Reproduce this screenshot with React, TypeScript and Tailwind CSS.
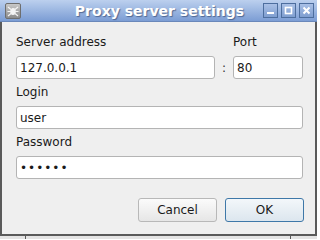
import React from "react";

const font = { fontFamily: '"DejaVu Sans", Verdana, sans-serif' };

const TitleButton = ({ kind }: { kind: "min" | "max" | "close" }) => (
  <div className="w-[15px] h-[15px] border border-[#4d6e9e] bg-gradient-to-b from-[#a9c0e6] to-[#7f9ed0] flex items-center justify-center">
    <svg width="9" height="9" viewBox="0 0 9 9">
      {kind === "min" && <rect x="1" y="6" width="7" height="2" fill="#fff" />}
      {kind === "max" && <rect x="1.5" y="1.5" width="6" height="6" fill="none" stroke="#fff" strokeWidth="1.6" />}
      {kind === "close" && (
        <path d="M1.5 1.5 L7.5 7.5 M7.5 1.5 L1.5 7.5" stroke="#fff" strokeWidth="2" />
      )}
    </svg>
  </div>
);

const Field = ({ value, className = "" }: { value: string; className?: string }) => (
  <div className={"h-[23px] bg-white border border-[#b4b4b4] rounded-[3px] px-[3px] flex items-center text-[12px] text-[#1a1a1a] " + className}>
    {value}
  </div>
);

export default function App() {
  return (
    <div className="w-[317px] h-[239px] bg-[#efefef] flex flex-col overflow-hidden" style={font}>
      {/* title bar */}
      <div className="h-[22px] shrink-0 bg-gradient-to-b from-[#bcd0ee] to-[#7c9dd4] border-b border-[#6a88ba] flex items-center pl-[5px] pr-[3px]">
        <div className="w-[51px] flex">
          <div className="w-[16px] h-[16px] rounded-[2px] border border-[#6e6e6e] bg-gradient-to-b from-[#c8c8c8] to-[#8c8c8c] flex items-center justify-center">
            <svg width="12" height="12" viewBox="0 0 12 12" fill="none" stroke="#f4f4f4" strokeWidth="1.2">
              <ellipse cx="6" cy="6.5" rx="2.2" ry="2.8" fill="#f4f4f4" />
              <path d="M1 2 L4 4.5 M11 2 L8 4.5 M0.5 6.5 L3.8 6.5 M11.5 6.5 L8.2 6.5 M1 11 L4 8.5 M11 11 L8 8.5" />
            </svg>
          </div>
        </div>
        <div
          className="flex-1 text-center text-white font-bold text-[14px] leading-none"
          style={{ textShadow: "1px 1px 1px rgba(40,60,100,0.6)" }}
        >
          Proxy server settings
        </div>
        <div className="flex gap-[3px]">
          <TitleButton kind="min" />
          <TitleButton kind="max" />
          <TitleButton kind="close" />
        </div>
      </div>

      {/* body */}
      <div className="flex-1 flex border-l-2 border-r-2 border-[#5a5a5a]">
        <div className="flex-1 flex flex-col pl-[14px] pr-[12px] pt-[13px] text-[12px] text-[#1a1a1a]">
          <div className="flex items-end">
            <div className="flex-1">
              <div className="leading-[14px] mb-[7px]">Server address</div>
              <Field value="127.0.0.1" />
            </div>
            <div className="w-[18px] h-[23px] flex items-center justify-center text-[#333]">:</div>
            <div className="w-[70px]">
              <div className="leading-[14px] mb-[7px]">Port</div>
              <Field value="80" />
            </div>
          </div>

          <div className="leading-[14px] mt-[6px] mb-[7px]">Login</div>
          <Field value="user" />

          <div className="leading-[14px] mt-[6px] mb-[7px]">Password</div>
          <Field value="••••••" className="tracking-[1px] text-[11px]" />

          <div className="flex justify-end gap-[8px] mt-[19px] -mr-[1px]">
            <button className="w-[79px] h-[24px] rounded-[3px] border border-[#b8b8b8] bg-gradient-to-b from-[#fbfbfb] to-[#e6e6e6] text-[12px] text-[#1a1a1a]">
              Cancel
            </button>
            <button className="w-[79px] h-[24px] rounded-[3px] border border-[#3f78a8] bg-gradient-to-b from-[#f3f7fa] to-[#dce6ee] text-[12px] text-[#1a1a1a]">
              OK
            </button>
          </div>
        </div>
      </div>

      {/* bottom frame */}
      <div className="h-[5px] shrink-0 border-t-2 border-[#5a5a5a] bg-[#e4e4e4] flex">
        <div className="w-[26px] border-r border-[#5a5a5a]" />
        <div className="flex-1 border-r border-[#5a5a5a]" />
        <div className="w-[26px]" />
      </div>
    </div>
  );
}
